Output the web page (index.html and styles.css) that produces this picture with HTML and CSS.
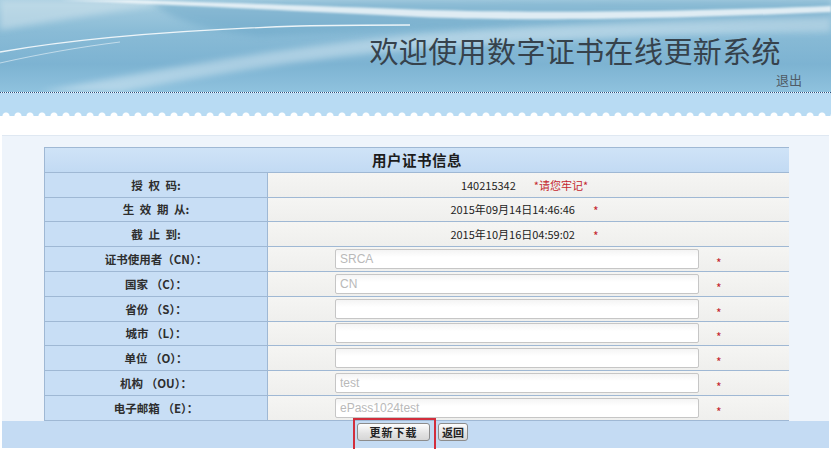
FILE: index.html
```html
<!DOCTYPE html>
<html lang="zh-CN">
<head>
<meta charset="utf-8">
<title>数字证书在线更新系统</title>
<link rel="stylesheet" href="styles.css">
</head>
<body>
<header class="banner">
  <svg class="banner-art" viewBox="0 0 831 92" preserveAspectRatio="none" aria-hidden="true">
    <defs>
      <linearGradient id="sky" x1="0" y1="0" x2="0" y2="1">
        <stop offset="0" stop-color="#a6cde0"/>
        <stop offset="0.35" stop-color="#89bbd6"/>
        <stop offset="0.7" stop-color="#7db3d2"/>
        <stop offset="1" stop-color="#8fc2de"/>
      </linearGradient>
      <filter id="soft" x="-10%" y="-50%" width="120%" height="200%"><feGaussianBlur stdDeviation="3"/></filter>
      <filter id="soft1" x="-10%" y="-50%" width="120%" height="200%"><feGaussianBlur stdDeviation="1"/></filter>
    </defs>
    <rect width="831" height="92" fill="url(#sky)"/>
    <path d="M0 0 L200 0 C120 10 60 20 0 30 Z" fill="#d5e6ee" opacity=".5" filter="url(#soft)"/>
    <path d="M150 2 L831 0 L831 30 C600 24 420 28 260 36 C200 30 170 18 150 2 Z" fill="#5c9bc0" opacity=".35" filter="url(#soft)"/>
    <path d="M60 0 C200 6 320 12 420 17 C520 21 650 20 831 12 L831 6 C650 13 500 13 400 9 C300 5 200 2 130 0 Z" fill="#ffffff" opacity=".75" filter="url(#soft1)"/>
    <path d="M0 52 C80 38 180 30 300 26 C340 25 380 25 410 25" stroke="#ffffff" stroke-width="1.3" fill="none" opacity=".85"/>
    <path d="M0 63 C40 54 80 47 120 42" stroke="#ffffff" stroke-width="1" fill="none" opacity=".5"/>
    <path d="M40 92 C150 70 300 45 420 34 C560 24 700 19 831 17 L831 32 C700 32 560 40 440 47 C320 56 200 76 120 92 Z" fill="#eef6fa" opacity=".4" filter="url(#soft)"/>
  </svg>
  <div class="banner-text">
    <h1 class="title">欢迎使用数字证书在线更新系统</h1>
    <a class="logout" href="#">退出</a>
  </div>
</header>
<div class="band"></div>

<main class="panel">
  <div class="panel-body">
    <div class="cert">
      <div class="cert-head">用户证书信息</div>

      <div class="lbl spaced">授 权 码:</div>
      <div class="val"><span>140215342</span><span class="red">*请您牢记*</span></div>

      <div class="lbl spaced">生 效 期 从:</div>
      <div class="val"><span>2015年09月14日14:46:46</span><span class="red star-inline">*</span></div>

      <div class="lbl spaced">截 止 到:</div>
      <div class="val"><span>2015年10月16日04:59:02</span><span class="red star-inline">*</span></div>

      <div class="lbl">证书使用者（CN）：</div>
      <div class="field"><input class="inp" type="text" placeholder="SRCA"><span class="req">*</span></div>

      <div class="lbl">国家 （C）：</div>
      <div class="field"><input class="inp" type="text" placeholder="CN"><span class="req">*</span></div>

      <div class="lbl">省份 （S）：</div>
      <div class="field"><input class="inp" type="text"><span class="req">*</span></div>

      <div class="lbl">城市 （L）：</div>
      <div class="field"><input class="inp" type="text"><span class="req">*</span></div>

      <div class="lbl">单位 （O）：</div>
      <div class="field"><input class="inp" type="text"><span class="req">*</span></div>

      <div class="lbl">机构 （OU）：</div>
      <div class="field"><input class="inp" type="text" placeholder="test"><span class="req">*</span></div>

      <div class="lbl">电子邮箱 （E）：</div>
      <div class="field"><input class="inp" type="text" placeholder="ePass1024test"><span class="req">*</span></div>
    </div>
  </div>
  <div class="actions">
    <span class="hl"><button class="btn btn-main" type="button">更新下载</button></span>
    <button class="btn btn-back" type="button">返回</button>
  </div>
</main>
</body>
</html>
```

FILE: styles.css
```css
* { box-sizing: border-box; }

html, body {
  margin: 0;
  padding: 0;
  background: #ffffff;
  width: 831px;
  height: 449px;
  overflow: hidden;
  font-family: "Noto Sans CJK SC", "Liberation Sans", sans-serif;
  color: #222;
}

/* ---------- banner ---------- */
.banner {
  display: grid;
  height: 93px;
  border-bottom: 1px dotted #2f4f7a;
}
.banner-art,
.banner-text {
  grid-area: 1 / 1;
}
.banner-art {
  width: 831px;
  height: 92px;
  display: block;
}
.banner-text {
  display: flex;
  flex-direction: column;
  align-items: flex-end;
  padding: 34px 0 0 0;
}
.title {
  margin: 0 50px 0 0;
  font-size: 29px;
  line-height: 32px;
  font-weight: 400;
  color: #36424c;
  letter-spacing: 0.4px;
}
.logout {
  margin: 6px 29px 0 0;
  font-size: 13px;
  line-height: 16px;
  color: #4f5b66;
  text-decoration: none;
}

.band {
  height: 23px;
  background-color: #b8dbf3;
  background-image: radial-gradient(circle at 50% 100%, #ffffff 3px, rgba(255,255,255,0) 4px);
  background-size: 12px 6px;
  background-repeat: repeat-x;
  background-position: 0 100%;
}

/* ---------- panel ---------- */
.panel {
  margin: 19px 2px 0 2px;
  background: #eef4fb;
  border-top: 1px solid #dfe8f2;
}
.panel-body {
  padding: 11px 40px 0 42px;
}

.cert {
  display: grid;
  grid-template-columns: 222px 521px;
  grid-auto-rows: 23.8px;
  gap: 1px;
  background: #9fb8d4;
  border: 1px solid #9fb8d4;
  width: 745px;
}
.cert-head {
  grid-column: 1 / -1;
  display: flex;
  align-items: center;
  justify-content: center;
  background: linear-gradient(#cfe3f7, #c2daf3);
  font-size: 14.5px;
  font-weight: 700;
  color: #1c1c1c;
  letter-spacing: 0.5px;
}
.lbl {
  display: flex;
  align-items: center;
  justify-content: center;
  background: #c8def5;
  font-size: 11.5px;
  font-weight: 700;
  color: #2e2e2e;
  white-space: pre;
}
.lbl.spaced {
  word-spacing: 3px;
}
.val {
  display: flex;
  align-items: center;
  justify-content: center;
  gap: 18px;
  background: linear-gradient(#f5f5f3, #efefed);
  font-size: 11px;
  color: #222;
  padding-right: 8px;
}
.red {
  color: #c4262e;
}
.star-inline {
  font-size: 12px;
  padding-top: 3px;
}

.field {
  display: flex;
  align-items: center;
  background: linear-gradient(#f5f5f3, #efefed);
  padding-left: 67px;
}
.inp {
  width: 364px;
  height: 20px;
  margin: 0;
  padding: 0 4px;
  border: 1px solid #c6c6c6;
  border-radius: 2px;
  background: linear-gradient(#f4f4f4, #ffffff 40%);
  font-family: "Liberation Sans", Arial, sans-serif;
  font-size: 12px;
  color: #333;
  outline: none;
}
.inp::placeholder {
  color: #b9b9b9;
}
.req {
  margin-left: 17px;
  padding-top: 7px;
  font-size: 12px;
  color: #c4262e;
}

/* ---------- actions ---------- */
.actions {
  display: flex;
  justify-content: center;
  align-items: flex-start;
  gap: 8px;
  height: 27px;
  padding: 2px 6px 0 0;
  background: #c4dbf3;
}
.hl {
  position: relative;
  display: inline-flex;
}
.hl::after {
  content: "";
  position: absolute;
  left: -4px;
  right: -6px;
  top: -5px;
  bottom: -14px;
  border: 2px solid #d22e3c;
  pointer-events: none;
}
.btn {
  height: 18px;
  margin: 0;
  padding: 0;
  border: 1px solid #8c8c8c;
  border-radius: 3px;
  background: linear-gradient(#fdfdfd, #e2e2e2 60%, #d6d6d6);
  font-family: "Noto Sans CJK SC", sans-serif;
  font-size: 11px;
  font-weight: 700;
  line-height: 16px;
  color: #222;
}
.btn-main {
  width: 73px;
  letter-spacing: 1px;
}
.btn-back {
  width: 30px;
}
```
